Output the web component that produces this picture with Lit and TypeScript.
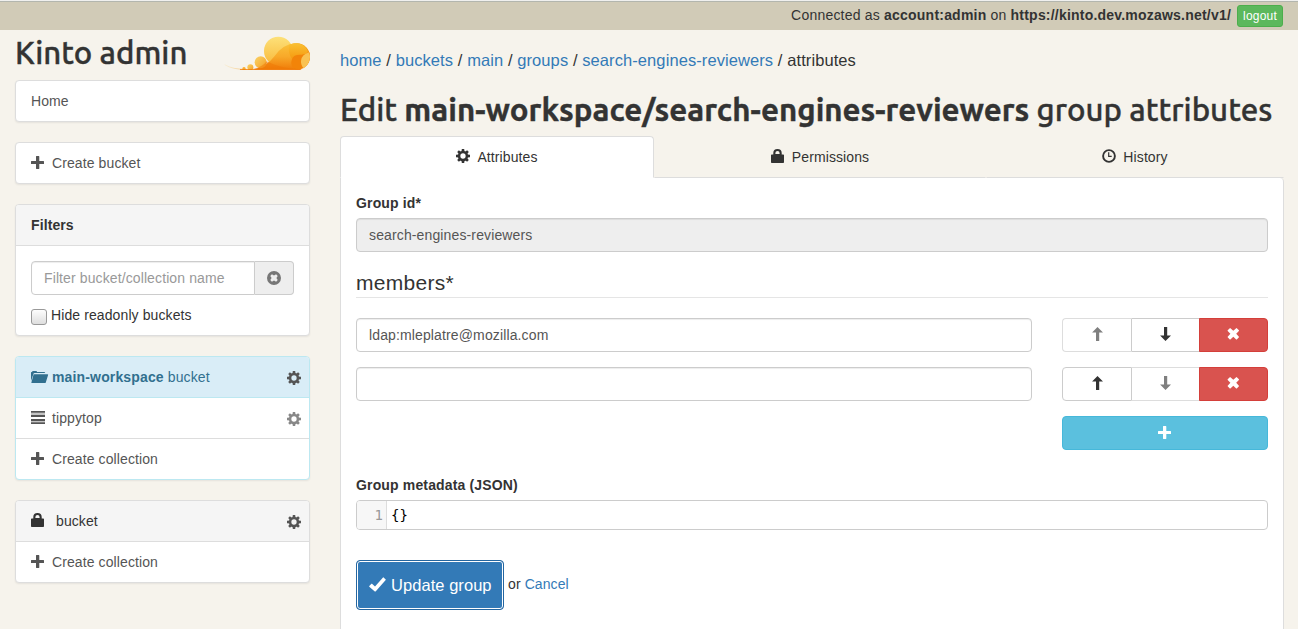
import { LitElement, html, svg, css } from "lit";
import { customElement, property, state } from "lit/decorators.js";
import { classMap } from "lit/directives/class-map.js";

const teeth = [0, 45, 90, 135, 180, 225, 270, 315];

const glyphs: Record<string, unknown> = {
  plus: svg`<path d="M5 .4q0-.4.4-.4h2.5q.4 0 .4.4v4.6h4.3q.4 0 .4.4v2.3q0 .4-.4.4h-4.3v4.5q0 .4-.4.4h-2.5q-.4 0-.4-.4v-4.5h-4.6q-.4 0-.4-.4v-2.3q0-.4.4-.4h4.6z"/>`,
  cog: svg`
    <circle cx="7" cy="7" r="3.9" fill="none" stroke="currentColor" stroke-width="2.5"/>
    ${teeth.map((a) => svg`<path transform="rotate(${a} 7 7)" d="M5.5 2.8 5.8 0h2.4l.3 2.8z"/>`)}`,
  lock: svg`<path fill-rule="evenodd" d="M.7 5.5h1.6V3.9Q2.3 0 6.5 0t4.2 3.9v1.6h1.6q.7 0 .7.7v7q0 .8-.8.8H.8q-.8 0-.8-.8v-7q0-.7.7-.7zM4.4 5h4.2v-1Q8.6 1.9 6.5 1.9T4.4 4z"/>`,
  list: svg`<path d="M0 0h14v1.8H0zM0 3.9h14v2H0zM0 7.9h14v2H0zM0 11.2h14v1.8H0z"/><path opacity=".35" d="M0 1.8h14v2.1H0zM0 9.9h14v1.3H0z"/>`,
  folder: svg`<path d="M0 11V2.4q0-.5.5-.5h.6l.4-.8h4l.6.8h7q.9 0 1.1 1H3.6q-.7 0-1 .7zM3.3 4.2h13.2q.9 0 .6.8l-2.3 7.4q-.3.7-1 .7H.8q-.6 0-.4-.7L2.5 4.8q.2-.6.8-.6z"/>`,
  time: svg`<circle cx="7" cy="7" r="5.9" fill="none" stroke="currentColor" stroke-width="1.9"/><path d="M6.1 3.3h1.2v3.4h2.4v1.2H6.1z"/>`,
  up: svg`<path d="M7.5 0 13 5.6H9.2V14H6V5.6H2.1z"/>`,
  down: svg`<path d="M6.5 14 12 8.4H8.2V0H5v8.4H1.1z"/>`,
  remove: svg`<path transform="translate(-.6)" d="M1.3 3.3 3.4 1.2q.3-.3.6 0L6.9 3.8l2.9-2.6q.3-.3.6 0l2.1 2.1q.3.3 0 .6L9.8 6.8l2.7 2.9q.3.3 0 .6l-2.1 2.1q-.3.3-.6 0L6.9 9.8 4 12.4q-.3.3-.6 0L1.3 10.3q-.3-.3 0-.6L4 6.8 1.3 3.9q-.3-.3 0-.6z"/>`,
  clear: svg`<path fill-rule="evenodd" d="M7 0a7 7 0 1 0 0 14A7 7 0 1 0 7 0zM4.9 3.3 7 4.6l2.1-1.3 1.6 1.6L9.4 7l1.3 2.1-1.6 1.6L7 9.4l-2.1 1.3-1.6-1.6L4.6 7 3.3 4.9z"/>`,
  ok: svg`<path d="M.3 8.1 2.4 5.8q.3-.3.6 0l3 2.7L14-.6q.3-.3.6 0l2.1 2.1q.3.3 0 .6L6.6 13.4q-.4.4-.8 0L.3 8.7q-.3-.3 0-.6z"/>`,
};

@customElement("ka-icon")
class KaIcon extends LitElement {
  @property() name = "plus";
  static styles = css`
    :host { display: inline-block; width: 14px; height: 14px; flex: none; }
    svg { display: block; width: 14px; height: 14px; overflow: visible; fill: currentColor; }
  `;
  render() {
    return html`<svg viewBox="0 0 14 14" aria-hidden="true">${glyphs[this.name]}</svg>`;
  }
}

@customElement("ka-logo")
class KaLogo extends LitElement {
  static styles = css`
    :host { display: block; width: 90px; height: 35px; }
    svg { display: block; width: 90px; height: 35px; }
  `;
  render() {
    return html`<svg viewBox="0 15 270 105" aria-hidden="true">
      <defs>
        <linearGradient id="sun" x1="0" y1="0" x2="0" y2="1"><stop offset="0" stop-color="#fde179"/><stop offset="1" stop-color="#f8b83a"/></linearGradient>
        <linearGradient id="puff" x1="0" y1="0" x2="1" y2="1"><stop offset="0" stop-color="#fad367"/><stop offset="1" stop-color="#f59f24"/></linearGradient>
        <linearGradient id="wave" x1="0" y1="0" x2="0" y2="1"><stop offset="0" stop-color="#fac23a"/><stop offset=".5" stop-color="#f8a92a"/><stop offset="1" stop-color="#f07c08"/></linearGradient>
        <linearGradient id="curl" x1="0" y1="0" x2="0" y2="1"><stop offset="0" stop-color="#f6a016"/><stop offset="1" stop-color="#f17a05"/></linearGradient>
        <linearGradient id="crest" x1="0" y1="0" x2="0" y2="1"><stop offset="0" stop-color="#fac033"/><stop offset="1" stop-color="#f59a10"/></linearGradient>
        <linearGradient id="tail" x1="0" y1="0" x2="1" y2="0"><stop offset="0" stop-color="#f8dfa0" stop-opacity=".5"/><stop offset="1" stop-color="#f39a1c"/></linearGradient>
      </defs>
      <path d="M14 104Q38 119 80 118" fill="none" stroke="url(#tail)" stroke-width="1.6"/>
      <circle cx="175" cy="63" r="43" fill="url(#sun)"/>
      <circle cx="231" cy="79" r="39" fill="url(#curl)"/>
      <path d="M100 119Q140 110 164 78 190 42 226 40L242 80 242 119z" fill="url(#wave)"/>
      <circle cx="122" cy="97" r="18" fill="url(#puff)"/>
      <circle cx="91" cy="112" r="9" fill="url(#puff)"/>
      <circle cx="72" cy="116" r="5" fill="#f8ad30"/>
      <path d="M140 94q44 23 104 24H84q40-2 56-24z" fill="#ef7504" opacity=".5"/>
      <path d="M208 44q30-11 48 7 11 13 6 20-8 5-22 4-17 0-24 12-14-21-8-43z" fill="url(#crest)"/>
      <path d="M216 87q4-13 24-13 16 2 27-9 4 9 3 18-3 28-30 35-34-2-24-31z" fill="#f28409"/>
      <path d="M267 67q3 7 3 15-2 22-19 33-9-10-8-23 2-18 24-25z" fill="#f9c253"/>
      <path d="M60 117.5h186l-8 2.5H60z" fill="#f07a06"/>
    </svg>`;
  }
}

interface Crumb { text: string; link: boolean; }

@customElement("app-root")
class AppRoot extends LitElement {
  @state() private members = ["ldap:mleplatre@mozilla.com", ""];

  private crumbs: Crumb[] = [
    { text: "home", link: true },
    { text: "buckets", link: true },
    { text: "main", link: true },
    { text: "groups", link: true },
    { text: "search-engines-reviewers", link: true },
    { text: "attributes", link: false },
  ];

  private tabs = [
    { icon: "cog", text: "Attributes", active: true },
    { icon: "lock", text: "Permissions", active: false },
    { icon: "time", text: "History", active: false },
  ];

  static styles = css`
    :host {
      display: flex; flex-direction: column; height: 100vh; overflow: hidden;
      background: #f6f3ec; color: #333;
      font: 14px/20px "Liberation Sans", Arial, sans-serif; letter-spacing: .1px;
    }
    * { box-sizing: border-box; }
    a { color: #337ab7; text-decoration: none; }
    input, button { font: inherit; letter-spacing: inherit; color: inherit; margin: 0; }
    .session {
      flex: none; height: 30px; padding: 2px 15px 0; display: flex; justify-content: flex-end;
      background: #d1cbb7; border-top: 1px solid #f0f0ee; box-shadow: inset 0 1px #b3b6ae;
    }
    .session-text { padding-top: 2px; margin-right: 6px; letter-spacing: .21px; }
    .logout {
      width: 46px; height: 22px; margin-top: 2px; padding: 1px 0; border: 1px solid #4cae4c; border-radius: 3px;
      background: #5cb85c; color: #fff; font-size: 12px; line-height: 18px; letter-spacing: .2px;
    }
    .columns { flex: 1; min-height: 0; display: grid; grid-template-columns: 325px 1fr; }
    .side { padding: 0 15px; min-width: 0; }
    .main { display: flex; flex-direction: column; padding: 0 14px 0 15px; min-width: 0; }
    h1, h2 {
      margin: 0; font-family: Ubuntu, "Noto Sans", sans-serif; font-weight: 500; white-space: nowrap;
      letter-spacing: 0; -webkit-text-stroke: .4px #333;
    }
    .brand { display: flex; justify-content: space-between; height: 50px; padding-top: 5px; }
    h1 { font-size: 31.2px; line-height: 36px; }
    .card {
      margin-bottom: 20px; background: #fff; border: 1px solid #ddd; border-radius: 4px;
      box-shadow: 0 1px 2px rgba(0, 0, 0, .07); overflow: hidden;
    }
    .card.current { border-color: #bce8f1; }
    .item { display: flex; align-items: center; height: 41px; padding: 0 8px 0 15px; color: #555; border-top: 1px solid #ddd; }
    .item:first-child { height: 40px; border-top: 0; }
    .item.head { background: #f5f5f5; color: #333; }
    .current .head { background: #d9edf7; color: #31708f; }
    .current .head + .item { border-top-color: #bce8f1; }
    .item > ka-icon:first-child { margin-right: 7px; }
    .item > ka-icon[name="lock"] { position: relative; top: -1px; }
    .item .label { flex: 1; }
    .item .indent { padding-left: 4px; }
    .gear { color: #555; position: relative; top: 1px; }
    .gear.dim { color: #888; }
    .title { font-weight: bold; }
    .current b { letter-spacing: .15px; }
    .filter { padding: 15px 15px 10px; border-top: 1px solid #ddd; }
    .group { display: flex; height: 34px; }
    .field {
      width: 100%; height: 34px; padding: 6px 12px; color: #555; background: #fff; letter-spacing: .13px;
      border: 1px solid #ccc; border-radius: 4px; box-shadow: inset 0 1px 1px rgba(0, 0, 0, .075); outline: 0;
    }
    .field::placeholder { color: #999; opacity: 1; }
    .field:disabled { background: #eee; opacity: 1; }
    .group .field { border-radius: 4px 0 0 4px; letter-spacing: .11px; }
    .addon {
      flex: none; width: 39px; display: flex; align-items: center; justify-content: center;
      background: #eee; color: #777; border: 1px solid #ccc; border-left: 0; border-radius: 0 4px 4px 0;
    }
    .check { display: flex; height: 20px; margin-top: 10px; gap: 4px; }
    .check input {
      appearance: none; width: 16px; height: 16px; margin-top: 4px; border: 1px solid #999; border-radius: 3px;
      background: linear-gradient(#fdfdfd, #dedede);
    }
    .crumbs { padding-top: 19px; font-size: 16.5px; line-height: 22px; letter-spacing: .085px; white-space: pre; }
    h2 { margin-top: 21px; font-size: 31.25px; line-height: 36px; height: 44px; }
    .tabs { display: grid; grid-template-columns: 314px 332px 298px; flex: none; }
    .tab {
      height: 42px; display: flex; align-items: center; justify-content: center; gap: 7px;
      border: 1px solid transparent; border-bottom-color: #ddd; border-radius: 4px 4px 0 0;
    }
    .tab ka-icon { margin-bottom: 2px; }
    .tab.active { background: #fff; border-color: #ddd; border-bottom-color: #fff; }
    .panel {
      flex: 1; background: #fff; border: 1px solid #ddd; border-top: 0; border-bottom: 0; border-radius: 0 4px 0 0;
      padding: 15px 15px 0;
    }
    .caption { display: block; font-weight: bold; margin-bottom: 5px; letter-spacing: .15px; }
    .legend { height: 31px; margin: 15px 0 20px; border-bottom: 1px solid #e5e5e5; font-size: 21px; line-height: 31px; letter-spacing: .3px; }
    .row { display: grid; grid-template-columns: 1fr 206px; gap: 30px; margin-bottom: 15px; }
    .buttons { display: grid; grid-template-columns: 70px 68px 68px; }
    .btn {
      height: 34px; padding: 0; display: flex; align-items: center; justify-content: center;
      background: #fff; color: #333; border: 1px solid #ccc;
    }
    .btn ka-icon { margin-bottom: 2px; }
    .btn.first { border-radius: 4px 0 0 4px; }
    .btn.mid { border-left: 0; }
    .btn.last { margin-left: -1px; border-radius: 0 4px 4px 0; background: #d9534f; border-color: #d43f3a; color: #fff; }
    .btn:disabled { color: #7f7f7f; border-color: #ddd; }
    .btn.first:disabled { border-right-color: #ccc; }
    .btn.add { grid-column: 2; background: #5bc0de; border-color: #46b8da; border-radius: 4px; color: #fff; }
    .btn.add ka-icon { margin: 0; }
    .json { margin-top: 25px; }
    .editor {
      display: flex; height: 30px; border: 1px solid #ccc; border-radius: 4px; overflow: hidden;
      font: 14px/28px "DejaVu Sans Mono", monospace; letter-spacing: 0; color: #000;
    }
    .gutter { width: 30px; padding-right: 3px; text-align: right; background: #f7f7f7; border-right: 1px solid #ddd; color: #999; }
    .code { padding-left: 4px; }
    .actions { display: flex; align-items: center; margin-top: 30px; height: 50px; }
    .submit {
      width: 148px; height: 50px; padding: 0 0 0 12px; margin-right: 4px; display: flex; align-items: center; gap: 8px;
      background: #337ab7; border: 1px solid #2566a0; border-radius: 4px; box-shadow: inset 0 0 0 1px #fff;
      color: #fff; font-size: 16.5px; letter-spacing: .05px; white-space: nowrap;
    }
    .or { margin-top: -2px; }
  `;

  private bucket(name: string, current: boolean) {
    return html`<section class=${classMap({ card: true, current })}>
      <div class="item head">
        <ka-icon name=${current ? "folder" : "lock"}></ka-icon>
        <span class=${classMap({ label: true, indent: !current })}><b>${name}</b>${name ? " " : ""}bucket</span>
        <ka-icon class="gear" name="cog"></ka-icon>
      </div>
      ${current
        ? html`<div class="item"><ka-icon name="list"></ka-icon><span class="label">tippytop</span><ka-icon class="gear dim" name="cog"></ka-icon></div>`
        : ""}
      <div class="item"><ka-icon name="plus"></ka-icon><span class="label">Create collection</span></div>
    </section>`;
  }

  render() {
    const last = this.members.length - 1;
    return html`
      <header class="session">
        <span class="session-text">Connected as <b>account:admin</b> on <b>https://kinto.dev.mozaws.net/v1/</b></span>
        <button class="logout">logout</button>
      </header>
      <div class="columns">
        <aside class="side">
          <div class="brand"><h1>Kinto admin</h1><ka-logo></ka-logo></div>
          <nav class="card"><div class="item"><span class="label">Home</span></div></nav>
          <nav class="card"><div class="item"><ka-icon name="plus"></ka-icon><span class="label">Create bucket</span></div></nav>
          <section class="card">
            <div class="item head title">Filters</div>
            <div class="filter">
              <div class="group">
                <input class="field" placeholder="Filter bucket/collection name">
                <span class="addon"><ka-icon name="clear"></ka-icon></span>
              </div>
              <label class="check"><input type="checkbox"><span>Hide readonly buckets</span></label>
            </div>
          </section>
          ${this.bucket("main-workspace", true)} ${this.bucket("", false)}
        </aside>
        <main class="main">
          <div class="crumbs">${this.crumbs.map(
            (c, i) => html`${i ? " / " : ""}${c.link ? html`<a href="#">${c.text}</a>` : c.text}`
          )}</div>
          <h2>Edit <b>main-workspace/search-engines-reviewers</b> group attributes</h2>
          <nav class="tabs">${this.tabs.map(
            (t) => html`<div class=${classMap({ tab: true, active: t.active })}><ka-icon name=${t.icon}></ka-icon><span>${t.text}</span></div>`
          )}</nav>
          <section class="panel">
            <label class="caption">Group id*</label>
            <input class="field" disabled value="search-engines-reviewers">
            <div class="legend">members*</div>
            ${this.members.map(
              (m, i) => html`<div class="row">
                <input class="field" .value=${m}>
                <div class="buttons">
                  <button class="btn first" ?disabled=${i === 0}><ka-icon name="up"></ka-icon></button>
                  <button class="btn mid" ?disabled=${i === last}><ka-icon name="down"></ka-icon></button>
                  <button class="btn last"><ka-icon name="remove"></ka-icon></button>
                </div>
              </div>`
            )}
            <div class="row"><button class="btn add"><ka-icon name="plus"></ka-icon></button></div>
            <div class="json">
              <label class="caption">Group metadata (JSON)</label>
              <div class="editor"><span class="gutter">1</span><span class="code">{}</span></div>
            </div>
            <div class="actions">
              <button class="submit"><ka-icon name="ok"></ka-icon><span>Update group</span></button>
              <span class="or">or <a href="#">Cancel</a></span>
            </div>
          </section>
        </main>
      </div>
    `;
  }
}
